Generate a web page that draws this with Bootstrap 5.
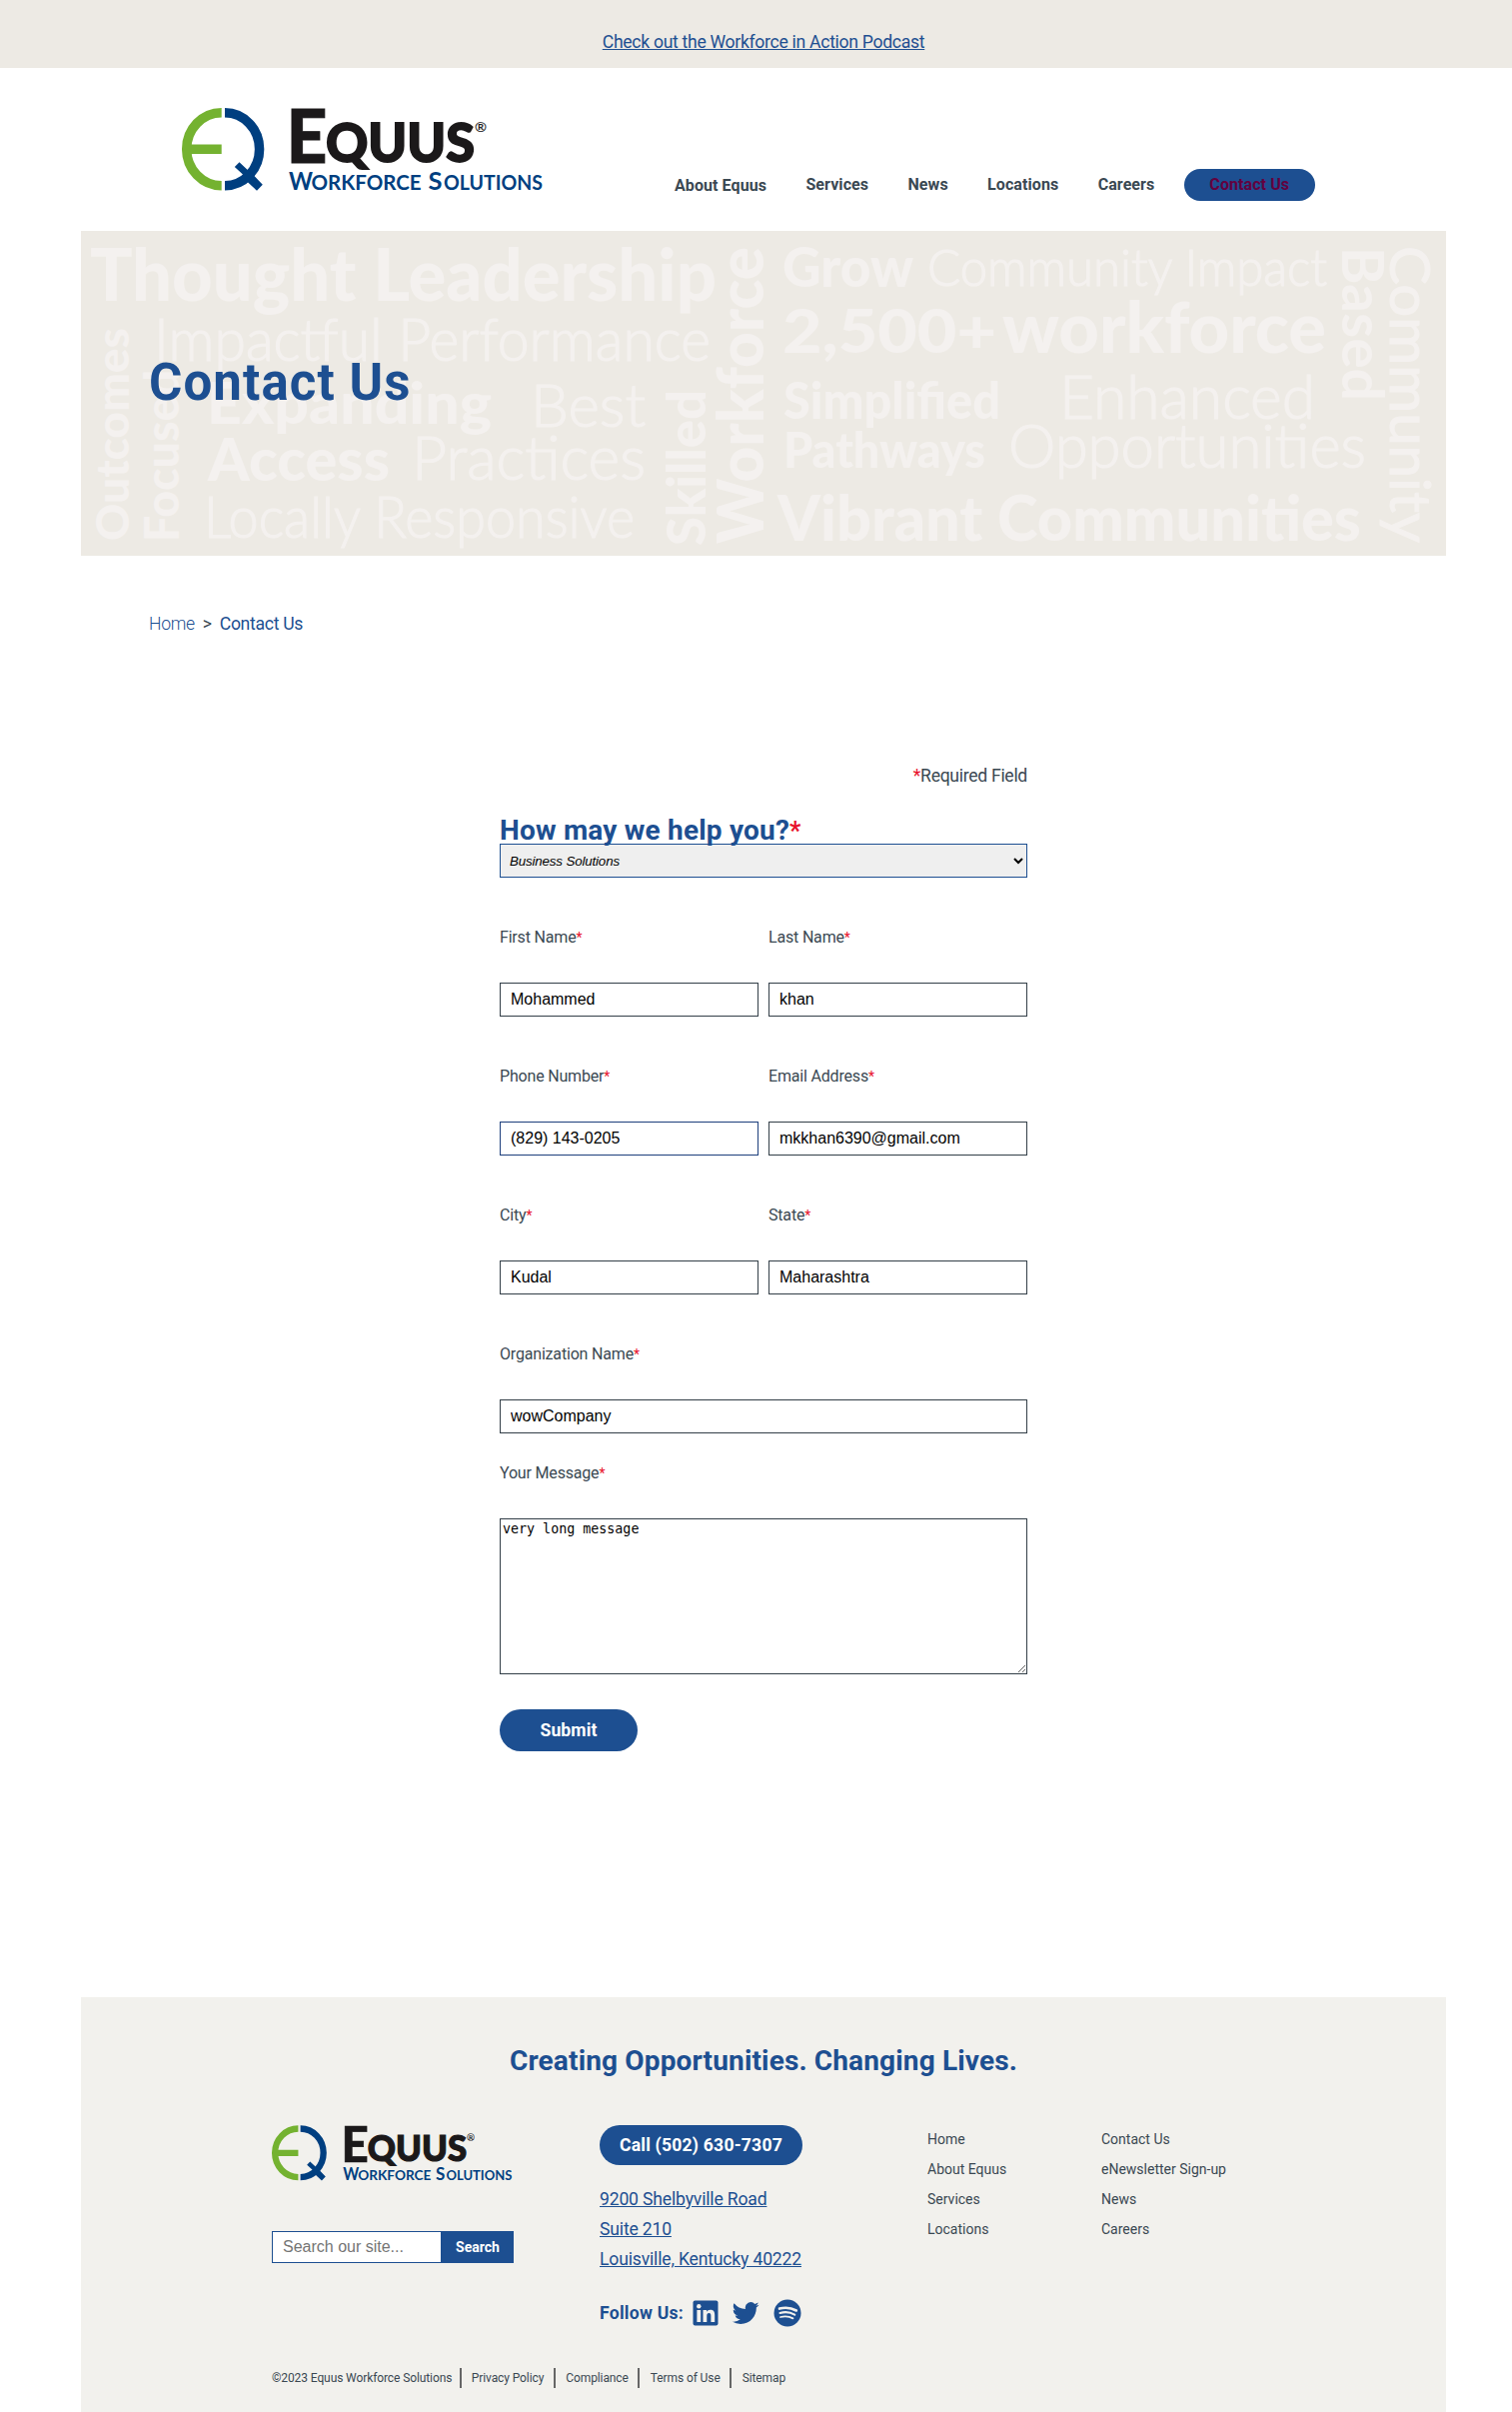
<!DOCTYPE html>
<html lang="en">
<head>
<meta charset="utf-8">
<meta name="viewport" content="width=device-width, initial-scale=1">
<title>Contact Us | Equus Workforce Solutions</title>
<link href="https://cdn.jsdelivr.net/npm/bootstrap@5.3.0/dist/css/bootstrap.min.css" rel="stylesheet">
<style>
:root{--blue:#1d4f91;--slate:#3a4852}
html,body{overflow-x:hidden}
body{font-family:Roboto,"Liberation Sans",sans-serif;color:var(--slate);font-size:17.6px;letter-spacing:-.3px;background:#fff}
a{color:var(--blue)}
.offset-page{padding-left:15px}
.topbar{height:68px;padding-top:30px;background:#edeae4;line-height:24px}
.site-head{height:163px;padding-left:182px}
.head-logo{width:362px;height:87px;margin-top:38px;margin-right:131px;overflow:visible}
.main-nav{margin-top:101px;height:32px;gap:39.400px;font-size:16px;font-weight:700;line-height:32px;letter-spacing:.08px}
.main-nav a{color:var(--slate);text-decoration:none;white-space:nowrap}
.main-nav .sunk{padding-top:1px}
.main-nav .pill{background:var(--blue);color:#63003f;border-radius:16px;width:131px;text-align:center;margin-left:-10px}
.shell{width:1366px;margin-left:81px}
.hero{height:325px;background:#edeae4}
.hero h1{position:absolute;left:68px;top:122px;margin:0;font-size:51px;line-height:60px;letter-spacing:1.100px;font-weight:700;color:var(--blue)}
.crumbs{padding:56px 0 0 68px;line-height:24px;height:184px}
.crumbs a{text-decoration:none;font-weight:300}
.crumbs .gt{margin:0 8px}
.crumbs .here{color:var(--blue)}
.req{color:#e8102a}
.contact-form{width:528px;margin-left:500px;height:1258px;padding-top:24px}
.note-line{line-height:24px;height:54px}
.ask{font-size:28px;line-height:25px;height:26px;font-weight:700;letter-spacing:.2px;color:var(--blue);margin:0}
.ask .req{font-size:25px}
.field,.pick{display:block;width:100%;height:34px;border:1px solid #333f48;border-radius:0;background:#fff;color:#000;font:16px "Liberation Sans",Arial,sans-serif;padding:0 10px;letter-spacing:0}
.pick{border-color:var(--blue);background:#efefef;font:italic 13.333px "Liberation Sans",Arial,sans-serif;padding:0 5px;letter-spacing:-.15px;margin-bottom:48px}
.field.active-edge{border-color:#1d3f7c}
.lbl{display:block;font-size:16px;line-height:24px;margin-bottom:33px;letter-spacing:-.18px}
.lbl .req{font-size:14px}
.pair{display:grid;grid-template-columns:1fr 1fr;gap:10px;margin-bottom:48px}
.msg-block{margin-top:28px}
.msg{display:block;width:100%;height:156px;border:1px solid #333f48;padding:2px;font:13.333px "DejaVu Sans Mono",monospace;letter-spacing:0;color:#000;resize:vertical}
.send{margin-top:35px;width:138px;height:42px;border:0;border-radius:21px;background:var(--blue);color:#fff;font-weight:700;font-size:17.6px;letter-spacing:.1px}
.foot{background:#f2f1ed;height:415px;padding:49px 0 0 191px}
.foot h2{font-size:28px;line-height:30px;font-weight:700;letter-spacing:.15px;color:var(--blue);margin:0 0 49px -191px;text-align:center}
.foot-cols{height:243px}
.c-logo{width:328px}.c-call{width:328px}.c-l1{width:174px}
.foot-logo{width:241px;height:58px;display:block;margin-top:-1px;overflow:visible}
.finder{width:242px;height:32px;margin-top:49px}
.finder input{width:170px;border:1px solid var(--blue);background:#fff;font:16px "Liberation Sans",Arial,sans-serif;padding:0 10px;border-radius:0;letter-spacing:0}
.finder input::placeholder{color:#757575}
.finder button{width:72px;border:0;background:var(--blue);color:#fff;font-size:14px;font-weight:700;letter-spacing:0}
.phone{display:block;width:203px;height:40px;line-height:40px;border-radius:20px;background:var(--blue);color:#fff;text-align:center;text-decoration:none;font-weight:700;letter-spacing:.2px}
.addr{line-height:30px;margin-top:19px;letter-spacing:-.18px}
.follow{margin-top:25px;height:28px;color:var(--blue);font-weight:700;letter-spacing:.25px}
.fu{width:93px}
.ic-tw{margin:0 14px 0 13px}
.foot-links{font-size:14px;line-height:30px;margin-top:-1px;letter-spacing:0}
.foot-links a,.legal a{color:var(--slate);text-decoration:none;display:block}
.legal{font-size:12px;line-height:20px;height:20px;letter-spacing:-.1px}
.legal a,.legal span{border-right:2px solid #666;padding-right:9.500px;margin-right:10.500px;white-space:nowrap}
.legal span{padding-right:7.500px;margin-right:10px}
.legal a:last-child{border:0}
</style>
</head>
<body>
<div class="topbar text-center offset-page"><a href="#">Check out the Workforce in Action Podcast</a></div>

<header class="site-head d-flex align-items-start">
  <svg class="head-logo flex-shrink-0" viewBox="0 0 362 87">
    <g id="brand" letter-spacing="0">
      <g fill="none" stroke-width="9.500">
        <path stroke="#74b230" d="M39.700 6.700A35 36.500 0 0 0 39.700 79.700M6 43.200H39.700"/>
        <path stroke="#003f80" d="M43 6.700A34.600 36.500 0 0 1 43 79.700"/>
      </g>
      <path fill="#003f80" d="M57.500 56.200L66 64.300L70 67.500L80.800 78.700L75 84.800L64.500 75L61 68.500L52.800 61Z"/>
      <g font-family="Lato,sans-serif" font-weight="900" fill="#1b191a" stroke="#1b191a">
        <text x="104.500" y="56.700" font-size="74" textLength="41" lengthAdjust="spacingAndGlyphs" stroke-width=".8">E</text>
        <text x="144" y="56.200" font-size="54" textLength="149" lengthAdjust="spacingAndGlyphs" stroke-width="1.800">QUUS</text>
        <text x="293" y="26" font-size="14" font-weight="400" textLength="12" lengthAdjust="spacingAndGlyphs" stroke-width=".2">®</text>
      </g>
      <g font-family="Lato,sans-serif" font-weight="700" fill="#003f80">
        <text x="107" y="84.300" font-size="25" textLength="24" lengthAdjust="spacingAndGlyphs">W</text>
        <text x="129.500" y="84.300" font-size="20" textLength="110" lengthAdjust="spacingAndGlyphs">ORKFORCE</text>
        <text x="246.500" y="84.300" font-size="25" textLength="14" lengthAdjust="spacingAndGlyphs">S</text>
        <text x="262" y="84.300" font-size="20" textLength="99" lengthAdjust="spacingAndGlyphs">OLUTIONS</text>
      </g>
    </g>
  </svg>
  <nav class="main-nav d-flex">
    <a href="#" class="sunk">About Equus</a><a href="#">Services</a><a href="#">News</a><a href="#">Locations</a><a href="#">Careers</a><a href="#" class="pill">Contact Us</a>
  </nav>
</header>

<section class="hero shell position-relative">
  <svg width="1366" height="325" viewBox="81 231 1366 325" class="d-block" fill="#f4f1ef" letter-spacing="0" font-family="Lato,sans-serif" aria-hidden="true">
    <g font-weight="900">
      <text x="90" y="301" font-size="73" textLength="627" lengthAdjust="spacingAndGlyphs">Thought Leadership</text>
      <text x="207" y="424" font-size="58" textLength="285" lengthAdjust="spacingAndGlyphs">Expanding</text>
      <text x="208" y="481" font-size="59" textLength="182" lengthAdjust="spacingAndGlyphs">Access</text>
      <text x="783" y="287" font-size="55" textLength="131" lengthAdjust="spacingAndGlyphs">Grow</text>
      <text x="783" y="353" font-size="61" textLength="214" lengthAdjust="spacingAndGlyphs">2,500+</text>
      <text x="1003" y="353" font-size="71" textLength="324" lengthAdjust="spacingAndGlyphs">workforce</text>
      <text x="784" y="419" font-size="51" textLength="217" lengthAdjust="spacingAndGlyphs">Simplified</text>
      <text x="784" y="468" font-size="50" textLength="202" lengthAdjust="spacingAndGlyphs">Pathways</text>
      <text x="778" y="541" font-size="63" textLength="584" lengthAdjust="spacingAndGlyphs">Vibrant Communities</text>
      <text transform="translate(129 541) rotate(-90)" font-size="46" textLength="213" lengthAdjust="spacingAndGlyphs">Outcomes</text>
      <text transform="translate(179 542) rotate(-90)" font-size="47" textLength="172" lengthAdjust="spacingAndGlyphs">Focused</text>
      <text transform="translate(706 546) rotate(-90)" font-size="53" textLength="156" lengthAdjust="spacingAndGlyphs">Skilled</text>
      <text transform="translate(764 544) rotate(-90)" font-size="64" textLength="297" lengthAdjust="spacingAndGlyphs">Workforce</text>
    </g>
    <g font-weight="300" stroke="#f4f1ef" stroke-width="1.200">
      <text x="154" y="361" font-size="59" textLength="557" lengthAdjust="spacingAndGlyphs">Impactful Performance</text>
      <text x="531" y="427" font-size="60" textLength="115" lengthAdjust="spacingAndGlyphs">Best</text>
      <text x="412" y="480" font-size="61" textLength="234" lengthAdjust="spacingAndGlyphs">Practices</text>
      <text x="204" y="538" font-size="57" textLength="431" lengthAdjust="spacingAndGlyphs">Locally Responsive</text>
      <text x="928" y="286" font-size="51" textLength="400" lengthAdjust="spacingAndGlyphs">Community Impact</text>
      <text x="1060" y="419" font-size="61" textLength="256" lengthAdjust="spacingAndGlyphs">Enhanced</text>
      <text x="1009" y="468" font-size="61" textLength="358" lengthAdjust="spacingAndGlyphs">Opportunities</text>
    </g>
    <text transform="translate(1343 247) rotate(90)" font-size="57" font-weight="700" textLength="154" lengthAdjust="spacingAndGlyphs">Based</text>
    <text transform="translate(1391 246) rotate(90)" font-size="56" font-weight="400" stroke="#f4f1ef" textLength="297" lengthAdjust="spacingAndGlyphs">Community</text>
  </svg>
  <h1>Contact Us</h1>
</section>

<div class="crumbs shell"><a href="#">Home</a><span class="gt">&gt;</span><span class="here">Contact Us</span></div>

<form class="contact-form">
  <div class="note-line text-end"><span class="req">*</span>Required Field</div>
  <p class="ask">How may we help you?<span class="req">*</span></p>
  <select class="pick"><option>Business Solutions</option></select>
  <div class="pair">
    <label><span class="lbl">First Name<span class="req">*</span></span><input class="field" value="Mohammed"></label>
    <label><span class="lbl">Last Name<span class="req">*</span></span><input class="field" value="khan"></label>
  </div>
  <div class="pair">
    <label><span class="lbl">Phone Number<span class="req">*</span></span><input class="field active-edge" value="(829) 143-0205"></label>
    <label><span class="lbl">Email Address<span class="req">*</span></span><input class="field" value="mkkhan6390@gmail.com"></label>
  </div>
  <div class="pair">
    <label><span class="lbl">City<span class="req">*</span></span><input class="field" value="Kudal"></label>
    <label><span class="lbl">State<span class="req">*</span></span><input class="field" value="Maharashtra"></label>
  </div>
  <label class="d-block"><span class="lbl">Organization Name<span class="req">*</span></span><input class="field" value="wowCompany"></label>
  <label class="d-block msg-block"><span class="lbl">Your Message<span class="req">*</span></span><textarea class="msg">very long message</textarea></label>
  <button type="button" class="send">Submit</button>
</form>

<footer class="foot shell">
  <h2>Creating Opportunities. Changing Lives.</h2>
  <div class="foot-cols d-flex">
    <div class="c-logo">
      <svg class="foot-logo" viewBox="0 0 362 87"><use href="#brand"/></svg>
      <div class="finder d-flex"><input placeholder="Search our site..."><button type="button">Search</button></div>
    </div>
    <div class="c-call">
      <a href="#" class="phone">Call (502) 630-7307</a>
      <div class="addr"><a href="#">9200 Shelbyville Road<br>Suite 210<br>Louisville, Kentucky 40222</a></div>
      <div class="follow d-flex align-items-center"><span class="fu">Follow Us:</span>
        <svg width="26" height="26" viewBox="0 0 26 26"><rect x=".5" y=".5" width="25" height="25" rx="2" fill="#1d4f91"/><g fill="#f2f1ed"><circle cx="6.300" cy="6.200" r="2.200"/><path d="M4.400 10h3.800v12H4.400zM10.500 10h3.600v1.700c.7-1.200 2-2 3.800-2 3.400 0 4.300 2.200 4.300 5.400V22h-3.800v-6.100c0-1.500-.2-2.900-1.900-2.900s-2.200 1.300-2.200 2.800V22h-3.800z"/></g></svg>
        <svg width="28" height="28" viewBox="0 0 24 24" class="ic-tw" fill="#1d4f91"><path d="M23.640 4.940a9.500 9.500 0 0 1-2.720.75 4.750 4.750 0 0 0 2.080-2.620 9.500 9.500 0 0 1-3 1.150 4.730 4.730 0 0 0-8.060 4.310A13.430 13.430 0 0 1 2.190 3.590a4.730 4.730 0 0 0 1.460 6.310 4.700 4.700 0 0 1-2.140-.59v.06a4.730 4.730 0 0 0 3.790 4.640 4.750 4.750 0 0 1-2.130.08 4.730 4.730 0 0 0 4.420 3.280A9.500 9.500 0 0 1 .54 19.330a13.400 13.400 0 0 0 7.260 2.130c8.710 0 13.470-7.210 13.470-13.470l-.02-.61a9.600 9.600 0 0 0 2.390-2.440z"/></svg>
        <svg width="28" height="28" viewBox="0 0 28 28"><circle cx="14" cy="14" r="13.500" fill="#1d4f91"/><g fill="none" stroke="#f2f1ed" stroke-linecap="round"><path stroke-width="2.600" d="M6 9.600Q15 7.200 22.800 11.500"/><path stroke-width="2.200" d="M6.500 14Q14.500 11.800 21.200 15.600"/><path stroke-width="1.800" d="M7 18Q14 16.200 19.500 19.400"/></g></svg>
      </div>
    </div>
    <div class="foot-links c-l1"><a href="#">Home</a><a href="#">About Equus</a><a href="#">Services</a><a href="#">Locations</a></div>
    <div class="foot-links"><a href="#">Contact Us</a><a href="#">eNewsletter Sign-up</a><a href="#">News</a><a href="#">Careers</a></div>
  </div>
  <div class="legal d-flex"><span>©2023 Equus Workforce Solutions</span><a href="#">Privacy Policy</a><a href="#">Compliance</a><a href="#">Terms of Use</a><a href="#">Sitemap</a></div>
</footer>
<script src="https://cdn.jsdelivr.net/npm/bootstrap@5.3.0/dist/js/bootstrap.bundle.min.js"></script>
</body>
</html>
